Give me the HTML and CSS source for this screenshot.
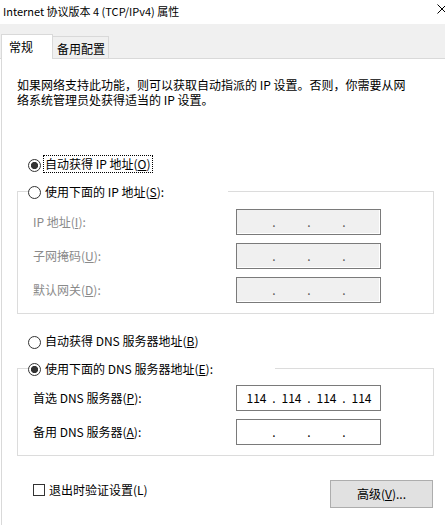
FILE: index.html
```html
<!DOCTYPE html>
<html lang="zh-CN">
<head>
<meta charset="utf-8">
<title>Internet 协议版本 4 (TCP/IPv4) 属性</title>
<link rel="stylesheet" href="styles.css">
</head>
<body>
<div class="window">
  <div class="titlebar">
    <span class="title">Internet 协议版本 4 (TCP/IPv4) 属性</span>
    <svg class="close" width="10" height="10" viewBox="0 0 10 10"><path d="M0.5 0.5 L9.5 9.5 M9.5 0.5 L0.5 9.5" stroke="#000" stroke-width="1" fill="none"/></svg>
  </div>
  <div class="tabs">
    <div class="tab tab-active">常规</div>
    <div class="tab">备用配置</div>
  </div>
  <div class="panel">
    <div class="intro">
      <div class="intro-line">如果网络支持此功能，则可以获取自动指派的 IP 设置。否则，你需要从网</div>
      <div class="intro-line">络系统管理员处获得适当的 IP 设置。</div>
    </div>

    <div class="radio-row row-ip-auto">
      <span class="radio checked"></span><span class="label focus">自动获得 IP 地址(<u>O</u>)</span>
    </div>

    <div class="group">
      <div class="group-head head-ip">
        <span class="radio"></span><span class="label">使用下面的 IP 地址(<u>S</u>):</span>
      </div>
      <div class="field-row field-first-ip">
        <span class="field-label disabled">IP 地址(<u>I</u>):</span>
        <div class="ipbox ipbox-disabled"><span class="seg"></span><span class="dot">.</span><span class="seg"></span><span class="dot">.</span><span class="seg"></span><span class="dot">.</span><span class="seg"></span></div>
      </div>
      <div class="field-row">
        <span class="field-label disabled">子网掩码(<u>U</u>):</span>
        <div class="ipbox ipbox-disabled"><span class="seg"></span><span class="dot">.</span><span class="seg"></span><span class="dot">.</span><span class="seg"></span><span class="dot">.</span><span class="seg"></span></div>
      </div>
      <div class="field-row">
        <span class="field-label disabled">默认网关(<u>D</u>):</span>
        <div class="ipbox ipbox-disabled"><span class="seg"></span><span class="dot">.</span><span class="seg"></span><span class="dot">.</span><span class="seg"></span><span class="dot">.</span><span class="seg"></span></div>
      </div>
    </div>

    <div class="radio-row row-dns-auto">
      <span class="radio"></span><span class="label">自动获得 DNS 服务器地址(<u>B</u>)</span>
    </div>

    <div class="group">
      <div class="group-head head-dns">
        <span class="radio checked"></span><span class="label">使用下面的 DNS 服务器地址(<u>E</u>):</span>
      </div>
      <div class="field-row field-first-dns">
        <span class="field-label">首选 DNS 服务器(<u>P</u>):</span>
        <div class="ipbox"><span class="seg">114</span><span class="dot">.</span><span class="seg">114</span><span class="dot">.</span><span class="seg">114</span><span class="dot">.</span><span class="seg">114</span></div>
      </div>
      <div class="field-row">
        <span class="field-label">备用 DNS 服务器(<u>A</u>):</span>
        <div class="ipbox"><span class="seg"></span><span class="dot">.</span><span class="seg"></span><span class="dot">.</span><span class="seg"></span><span class="dot">.</span><span class="seg"></span></div>
      </div>
    </div>

    <div class="footer">
      <div class="check"><span class="checkbox"></span><span>退出时验证设置(L)</span></div>
      <div class="button">高级(<u>V</u>)...</div>
    </div>
  </div>
</div>
</body>
</html>
```

FILE: styles.css
```css
* {
  box-sizing: border-box;
}

html,
body {
  margin: 0;
  padding: 0;
}

body {
  width: 445px;
  height: 525px;
  overflow: hidden;
  background: #fff;
  font-family: "Noto Sans CJK SC", sans-serif;
  font-size: 12px;
  color: #000;
}

.window {
  width: 445px;
  height: 525px;
  display: flex;
  flex-direction: column;
}

.titlebar {
  height: 24px;
  flex: none;
  display: flex;
  align-items: flex-start;
  background: #fff;
}

.title {
  padding: 3px 0 0 3px;
  font-size: 11px;
  line-height: 16px;
  white-space: nowrap;
}

.close {
  flex: none;
  margin: 4px -2px 0 auto;
}

.tabs {
  height: 35px;
  flex: none;
  background: #f0f0f0;
  border-bottom: 1px solid #d9d9d9;
  display: flex;
  align-items: flex-end;
  padding-left: 1px;
}

.tab {
  height: 22px;
  width: 56px;
  border-top: 1px solid #d9d9d9;
  border-right: 1px solid #d9d9d9;
  padding: 4px 0 0 4px;
  line-height: 16px;
  white-space: nowrap;
}

.tab-active {
  height: 25px;
  width: 52px;
  margin-bottom: -1px;
  background: #fff;
  border-left: 1px solid #d9d9d9;
  padding: 4px 0 0 7px;
}

.panel {
  flex: 1;
  margin-left: 1px;
  border-left: 1px solid #d9d9d9;
  padding-left: 15px;
}

.intro {
  padding-top: 18px;
}

.intro-line {
  height: 15px;
  line-height: 15px;
  white-space: nowrap;
}

.radio-row {
  display: flex;
  align-items: center;
  height: 18px;
  padding-left: 11px;
}

.row-ip-auto {
  margin-top: 48px;
}

.row-dns-auto {
  margin-top: 18px;
}

.radio {
  flex: none;
  width: 13px;
  height: 13px;
  margin: 2px 2px 0 0;
  border: 1px solid #333;
  border-radius: 50%;
  background: #fff;
}

.radio.checked {
  background: radial-gradient(circle, #333 0 3.3px, #fff 3.9px);
}

.label {
  border: 1px solid transparent;
  padding: 0 1px;
  line-height: 16px;
  white-space: nowrap;
}

.label.focus {
  border: 1px dotted #000;
}

.group {
  width: 417px;
  margin-top: 18px;
  border: 1px solid #dcdcdc;
  padding-bottom: 10px;
}

.group-head {
  display: flex;
  align-items: center;
  height: 17px;
  margin: -9px 0 0 10px;
  background: #fff;
}

.head-ip {
  width: 200px;
}

.head-dns {
  width: 247px;
}

.field-row {
  display: flex;
  align-items: center;
  height: 26px;
  margin-top: 8px;
  padding-left: 15px;
}

.field-first-ip {
  margin-top: 9px;
}

.field-first-dns {
  margin-top: 8px;
}

.field-label {
  width: 203px;
  flex: none;
  line-height: 16px;
  white-space: nowrap;
}

.field-label.disabled {
  color: #8a8a8a;
}

.ipbox {
  width: 145px;
  height: 26px;
  flex: none;
  display: flex;
  align-items: center;
  padding-left: 5px;
  border: 1px solid #7a7a7a;
  background: #fff;
  line-height: 16px;
}

.ipbox-disabled {
  background: #f0f0f0;
  box-shadow: inset -1px -1px 0 #fff;
}

.seg {
  width: 29px;
  text-align: center;
}

.dot {
  width: 6px;
  text-align: center;
}

.ipbox-disabled .dot {
  color: #555;
}

.footer {
  display: flex;
  justify-content: space-between;
  align-items: flex-start;
  width: 417px;
  margin-top: 24px;
  padding-left: 16px;
}

.check {
  display: flex;
  align-items: center;
  margin-top: 2px;
  line-height: 16px;
  white-space: nowrap;
}

.checkbox {
  flex: none;
  width: 12px;
  height: 12px;
  margin-right: 4px;
  border: 1px solid #333;
  background: #fff;
}

.button {
  width: 103px;
  height: 28px;
  margin-right: 1px;
  display: flex;
  align-items: center;
  justify-content: center;
  background: #e1e1e1;
  border: 1px solid #adadad;
  line-height: 16px;
  white-space: nowrap;
}
```
